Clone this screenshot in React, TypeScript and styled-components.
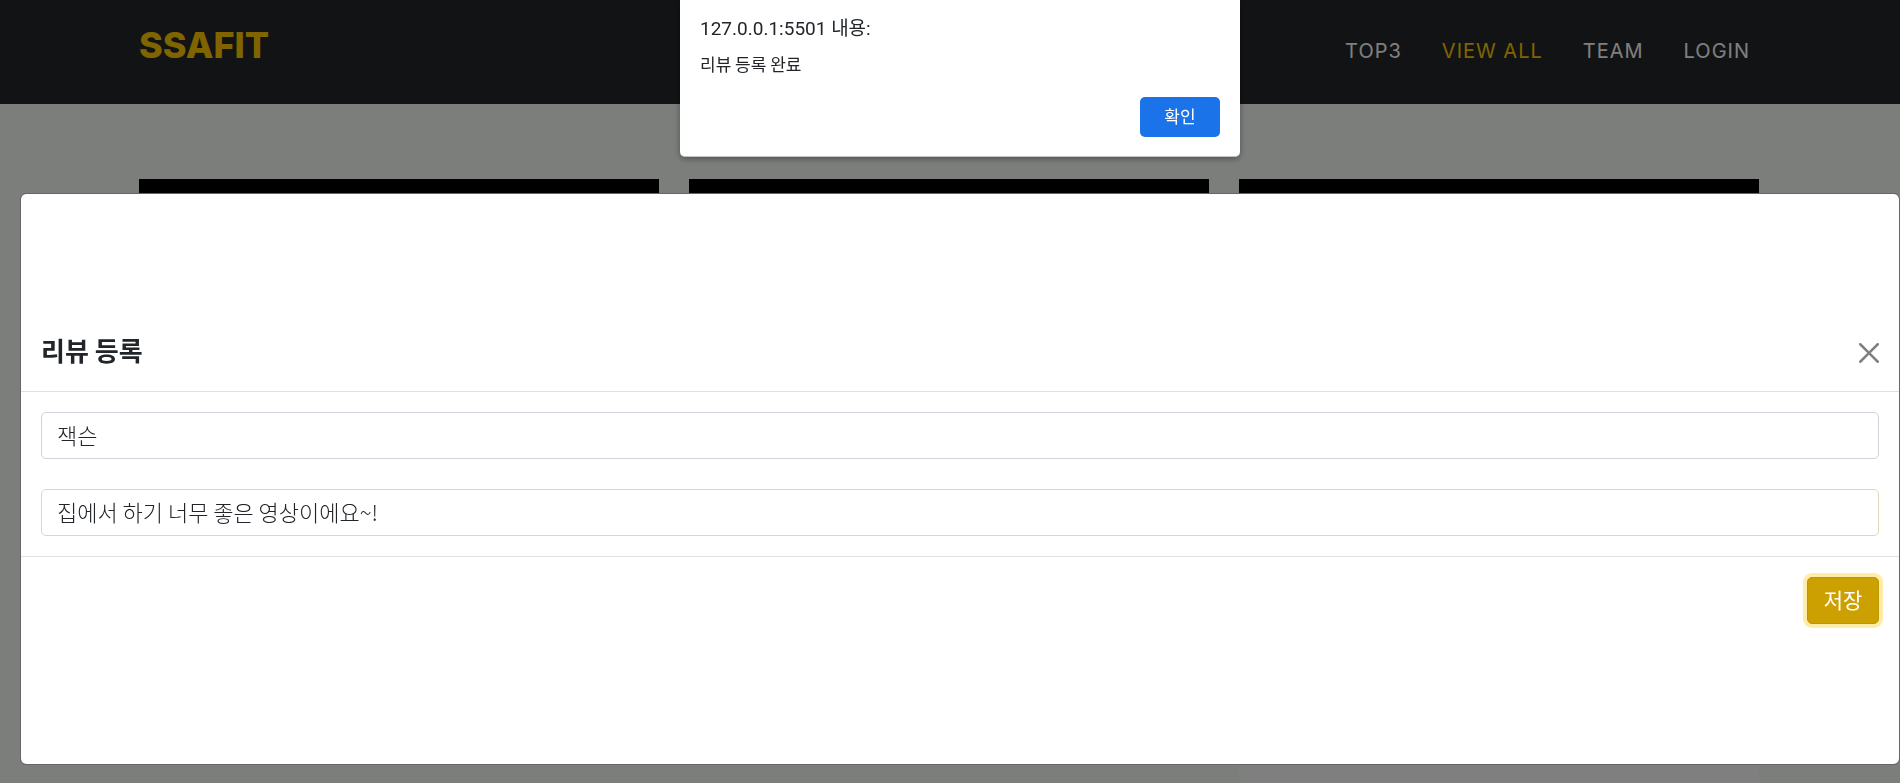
import React from 'react';
import styled, { createGlobalStyle } from 'styled-components';

const GlobalStyle = createGlobalStyle`
  *, *::before, *::after { box-sizing: border-box; }
  body {
    margin: 0;
    overflow: hidden;
    background: #f8fcf9;
    color: #212529;
    font-family: 'Noto Sans CJK KR', sans-serif;
    font-size: 20px;
    line-height: 30px;
  }
`;

const Page = styled.div`
  height: 100vh;
  overflow: hidden;
`;

const Navbar = styled.header`
  display: flex;
  justify-content: center;
  height: 104px;
  background: #25272a;
`;

const Container = styled.div`
  width: 100%;
  max-width: 1650px;
  margin: 0 auto;
  padding: 0 15px;
`;

const NavInner = styled(Container)`
  display: flex;
  align-items: flex-start;
  justify-content: space-between;
  padding: 23px 25px 0 14px;
  font-family: Inter, sans-serif;
`;

const Brand = styled.a`
  color: #ffc800;
  font-size: 36px;
  font-weight: 800;
  line-height: 44px;
  text-decoration: none;
`;

const Menu = styled.nav`
  display: flex;
  gap: 40px;
  padding-top: 13px;
`;

const MenuLink = styled.a<{ $active?: boolean }>`
  color: ${(p) => (p.$active ? '#ffc800' : '#ffffff')};
  font-size: 20px;
  letter-spacing: 1px;
  text-decoration: none;
`;

const Cards = styled(Container)`
  display: grid;
  grid-template-columns: repeat(3, 1fr);
  gap: 30px;
  padding: 75px 16px 0 14px;
`;

const Card = styled.article`
  background: #ffffff;
`;

const Player = styled.div`
  height: 292px;
  background: #000000;
`;

const CardText = styled.div<{ $tall?: boolean }>`
  height: ${(p) => (p.$tall ? 340 : 200)}px;
`;

const Backdrop = styled.div`
  position: fixed;
  inset: 0;
  padding: 193px 0 18px 20px;
  background: rgba(0, 0, 0, 0.5);
`;

const Modal = styled.form`
  display: flex;
  flex-direction: column;
  justify-content: center;
  height: 572px;
  padding-bottom: 1px;
  border: 1px solid #656665;
  border-radius: 6px;
  background: #ffffff;
  background-clip: padding-box;
`;

const ModalHeader = styled.div`
  display: flex;
  align-items: center;
  justify-content: space-between;
  padding: 20px;
  border-bottom: 1px solid #dee2e6;
`;

const ModalTitle = styled.h5`
  margin: 0;
  padding-bottom: 4px;
  font-size: 26px;
  font-weight: 700;
  line-height: 34px;
`;

const CloseButton = styled.button`
  display: flex;
  padding: 2px 0 0;
  border: 0;
  background: none;
  color: #7f7f7f;
`;

const ModalBody = styled.div`
  display: flex;
  flex-direction: column;
  gap: 30px;
  padding: 20px;
`;

const TextInput = styled.input<{ $touched?: boolean }>`
  width: 100%;
  height: 47px;
  padding: 6px 15px 10px;
  border: 1px solid ${(p) => (p.$touched ? '#ddd8bd' : '#ced4da')};
  border-radius: 5px;
  background: #ffffff;
  color: #212529;
  font-family: 'Noto Sans CJK KR', sans-serif;
  font-size: 22px;
  font-weight: 300;
  line-height: 29px;
  outline: none;
`;

const ModalFooter = styled.div`
  display: flex;
  justify-content: flex-end;
  padding: 20px;
  border-top: 1px solid #dee2e6;
`;

const SaveButton = styled.button`
  width: 72px;
  height: 47px;
  padding: 0 0 3px;
  border: 1px solid #bf9600;
  border-radius: 5px;
  background: #cca000;
  box-shadow: 0 0 0 4px #ffeca8;
  color: #ffffff;
  font-family: 'Noto Sans CJK KR', sans-serif;
  font-size: 21px;
`;

const Alert = styled.div`
  position: fixed;
  top: 0;
  left: 50%;
  width: 560px;
  margin-left: -270px;
  padding: 14px 20px 19px;
  border-bottom: 1px solid #c4c4c4;
  border-radius: 0 0 5px 5px;
  background: #ffffff;
  box-shadow: 0 2px 6px rgba(0, 0, 0, 0.35);
`;

const AlertHost = styled.p`
  margin: 0;
  font-family: Roboto, 'Noto Sans CJK KR', sans-serif;
  font-size: 19px;
`;

const AlertMessage = styled.p`
  margin: 5px 0 18px;
  font-size: 17px;
`;

const AlertActions = styled.div`
  display: flex;
  justify-content: flex-end;
`;

const ConfirmButton = styled.button`
  width: 80px;
  height: 40px;
  padding: 0 0 3px;
  border: 0;
  border-radius: 5px;
  background: #1a73e8;
  color: #ffffff;
  font-family: 'Noto Sans CJK KR', sans-serif;
  font-size: 17px;
`;

const menu = ['TOP3', 'VIEW ALL', 'TEAM', 'LOGIN'];

export default function App() {
  return (
    <>
      <GlobalStyle />
      <Page>
        <Navbar>
          <NavInner>
            <Brand href="#">SSAFIT</Brand>
            <Menu>
              {menu.map((label) => (
                <MenuLink key={label} href="#" $active={label === 'VIEW ALL'}>
                  {label}
                </MenuLink>
              ))}
            </Menu>
          </NavInner>
        </Navbar>
        <Cards as="main">
          {[0, 1, 2].map((i) => (
            <div key={i}>
              <Card>
                <Player />
                <CardText $tall={i === 2} />
              </Card>
            </div>
          ))}
        </Cards>
      </Page>
      <Backdrop>
        <Modal role="dialog" aria-label="리뷰 등록" onSubmit={(e) => e.preventDefault()}>
          <ModalHeader>
            <ModalTitle>리뷰 등록</ModalTitle>
            <CloseButton type="button" aria-label="닫기">
              <svg width="20" height="20" viewBox="0 0 16 16" fill="currentColor">
                <path d="M.293.293a1 1 0 0 1 1.414 0L8 6.586 14.293.293a1 1 0 1 1 1.414 1.414L9.414 8l6.293 6.293a1 1 0 0 1-1.414 1.414L8 9.414l-6.293 6.293a1 1 0 0 1-1.414-1.414L6.586 8 .293 1.707a1 1 0 0 1 0-1.414z" />
              </svg>
            </CloseButton>
          </ModalHeader>
          <ModalBody>
            <TextInput type="text" aria-label="작성자" defaultValue="잭슨" />
            <TextInput type="text" aria-label="리뷰 내용" defaultValue="집에서 하기 너무 좋은 영상이에요~!" $touched />
          </ModalBody>
          <ModalFooter>
            <SaveButton type="submit">저장</SaveButton>
          </ModalFooter>
        </Modal>
      </Backdrop>
      <Alert role="alertdialog" aria-label="알림">
        <AlertHost>127.0.0.1:5501 내용:</AlertHost>
        <AlertMessage>리뷰 등록 완료</AlertMessage>
        <AlertActions>
          <ConfirmButton type="button">확인</ConfirmButton>
        </AlertActions>
      </Alert>
    </>
  );
}
